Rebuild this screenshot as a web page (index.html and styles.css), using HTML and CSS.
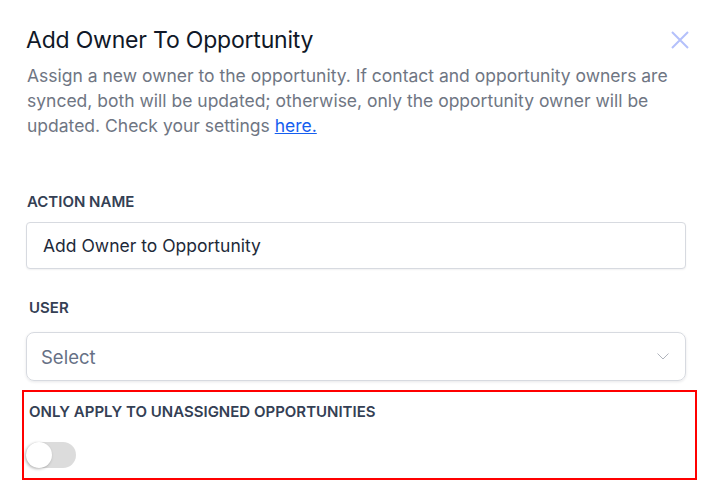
FILE: index.html
```html
<!DOCTYPE html>
<html lang="en">
<head>
    <meta charset="UTF-8">
    <meta name="viewport" content="width=device-width, initial-scale=1.0">
    <title>Add Owner To Opportunity</title>
    <link rel="stylesheet" href="styles.css">
</head>
<body>
    <div class="modal">
        <header class="modal-header">
            <h1>Add Owner To Opportunity</h1>
            <button class="close-btn" aria-label="Close">
                <svg width="18" height="18" viewBox="0 0 18 18" fill="none">
                    <path d="M1 1L17 17M17 1L1 17" stroke="currentColor" stroke-width="2"/>
                </svg>
            </button>
        </header>

        <p class="description">
            Assign a new owner to the opportunity. If contact and opportunity owners are synced, both will be updated; otherwise, only the opportunity owner will be updated. Check your settings <a href="#">here.</a>
        </p>

        <div class="field">
            <label for="actionName">Action Name</label>
            <input id="actionName" class="text-input" type="text" value="Add Owner to Opportunity">
        </div>

        <div class="field field-user">
            <label>User</label>
            <div class="select">
                <span class="placeholder">Select</span>
                <svg class="chevron" width="12" height="7" viewBox="0 0 12 7" fill="none">
                    <path d="M0.5 0.5L6 6L11.5 0.5" stroke="currentColor" stroke-width="1"/>
                </svg>
            </div>
        </div>

        <div class="field highlight">
            <label>Only apply to unassigned opportunities</label>
            <span class="toggle"><span class="knob"></span></span>
        </div>
    </div>
</body>
</html>
```

FILE: styles.css
```css
* {
    margin: 0;
    padding: 0;
    box-sizing: border-box;
}

body {
    font-family: 'Inter', 'Noto Sans', sans-serif;
    background: #ffffff;
    color: #101828;
}

.modal {
    padding: 25px 30px 0 26px;
}

.modal-header {
    display: flex;
    justify-content: space-between;
    align-items: flex-start;
}

h1 {
    font-size: 23px;
    font-weight: 400;
    line-height: 30px;
    letter-spacing: -0.2px;
}

.close-btn {
    background: none;
    border: none;
    color: #b4c0fb;
    margin: 6px -3px 0 0;
    cursor: pointer;
}

.description {
    margin-top: 8px;
    font-size: 17.5px;
    line-height: 25px;
    color: #6f7683;
    padding-left: 1px;
}

.description a {
    color: #155eef;
}

.field label {
    display: block;
    font-size: 15px;
    font-weight: 600;
    text-transform: uppercase;
    color: #344054;
    line-height: 20px;
    padding-left: 1px;
}

.field:first-of-type {
    margin-top: 54px;
}

.text-input {
    display: block;
    width: 100%;
    height: 47px;
    margin-top: 10px;
    padding: 0 16px;
    border: 1px solid #d7dae0;
    border-radius: 4px;
    box-shadow: 0 1px 2px rgba(16, 24, 40, 0.06);
    font-family: inherit;
    font-size: 17.5px;
    color: #1d2939;
    outline: none;
}

.field-user {
    margin-top: 29px;
}

.field-user label {
    padding-left: 3px;
}

.select {
    display: flex;
    align-items: center;
    justify-content: space-between;
    height: 49px;
    margin-top: 14px;
    padding: 0 16px 0 14px;
    border: 1px solid #d7dae0;
    border-radius: 8px;
    box-shadow: 0 1px 3px rgba(16, 24, 40, 0.1);
}

.placeholder {
    font-size: 18.5px;
    color: #667085;
}

.chevron {
    color: #b0b4bc;
}

.highlight {
    margin: 9px -11px 0 -4px;
    padding: 10px 0 10px 5px;
    border: 2px solid #ff0000;
}

.highlight label {
    padding-left: 0;
}

.toggle {
    display: block;
    position: relative;
    width: 50px;
    height: 26px;
    margin: 20px 0 0 -3px;
    border-radius: 13px;
    background: #dcdcdc;
}

.knob {
    position: absolute;
    left: 0;
    top: 0;
    width: 26px;
    height: 26px;
    border-radius: 50%;
    background: #ffffff;
    box-shadow: -1px 1px 3px rgba(0, 0, 0, 0.3);
}
```
